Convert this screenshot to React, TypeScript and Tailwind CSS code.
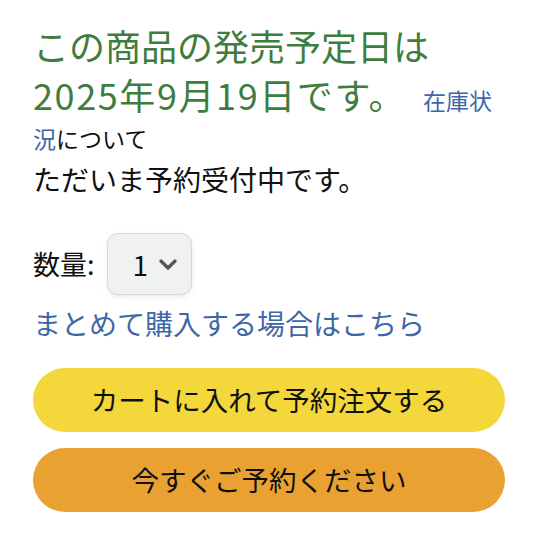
export default function App() {
  return (
    <div
      className="w-[538px] h-[538px] bg-white pl-[33px] pr-[33px] pt-[21px] text-[#0f1111]"
      style={{ fontFamily: '"Noto Sans CJK JP", "Noto Sans", sans-serif' }}
    >
      <div className="text-[23px] leading-[38px]">
        <span className="text-[36px] leading-[48px] text-[#3f7d3f]">
          この商品の発売予定日は
          <br />
          <span className="tracking-[1.6px]">2025年9月19日です。</span>
        </span>
        <a className="ml-[17px] text-[#3d67a8]">在庫状況</a>
        <span>について</span>
      </div>
      <p className="mt-[2px] text-[28px] leading-[40px]">ただいま予約受付中です。</p>

      <div className="mt-[34px] flex items-center gap-[12px]">
        <span className="text-[27px]">数量:</span>
        <div className="flex h-[62px] w-[85px] items-center gap-[11px] rounded-[11px] border border-[#d5d9d9] bg-[#f0f2f2] pl-[25px] shadow-[0_2px_5px_rgba(213,217,217,0.5)]">
          <span className="text-[28px]">1</span>
          <svg width="18" height="12" viewBox="0 0 18 12" className="mt-[2px]">
            <path d="M2 2 L9 9 L16 2" fill="none" stroke="#555" strokeWidth="3.2" strokeLinecap="round" strokeLinejoin="round" />
          </svg>
        </div>
      </div>

      <a className="mt-[8px] block text-[28px] leading-[40px] text-[#3d67a8]">まとめて購入する場合はこちら</a>

      <div className="mt-[25px] flex flex-col gap-[16px]">
        <button className="h-[64px] w-full rounded-full bg-[#f4d73a] text-[27.5px]">カートに入れて予約注文する</button>
        <button className="h-[64px] w-full rounded-full bg-[#e9a231] text-[27.5px]">今すぐご予約ください</button>
      </div>
    </div>
  );
}
